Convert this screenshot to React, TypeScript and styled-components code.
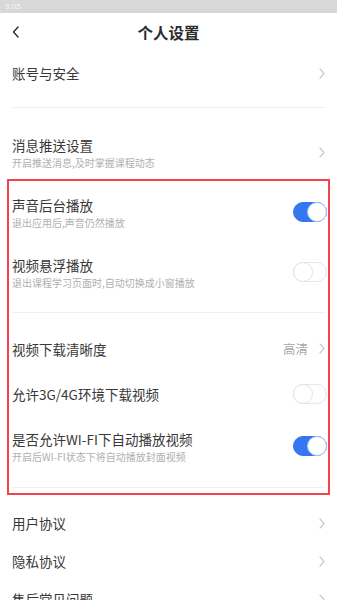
import React from "react";
import styled, { createGlobalStyle } from "styled-components";

const GlobalStyle = createGlobalStyle`
  html, body { margin: 0; padding: 0; background: #ffffff; }
  body { font-family: "Noto Sans CJK SC", "Noto Sans", sans-serif; -webkit-font-smoothing: antialiased; }
`;

const Page = styled.div`
  position: relative;
  width: 337px;
  height: 600px;
  overflow: hidden;
  background: #ffffff;
`;

const StatusBar = styled.div`
  height: 13px;
  background: #d8d8d8;
  display: flex;
  align-items: center;
  padding-left: 5px;
  font-family: "Roboto", "Noto Sans", sans-serif;
  font-size: 8px;
  color: #f4f4f4;
`;

const Header = styled.div`
  position: relative;
  height: 37px;
  display: flex;
  align-items: center;
  justify-content: center;
`;

const BackButton = styled.div`
  position: absolute;
  left: 11px;
  top: 12px;
  width: 10px;
  height: 14px;
  display: flex;
`;

const Title = styled.div`
  font-size: 15.5px;
  font-weight: 700;
  color: #2b2b2b;
  line-height: 20px;
`;

const Group = styled.div<{ $top: number; $bottom: number }>`
  padding: ${(p) => p.$top}px 0 ${(p) => p.$bottom}px;
`;

const Divider = styled.div`
  height: 1px;
  margin: 0 11px 0 12px;
  background: #f0f0f0;
`;

const Row = styled.div<{ $h: number }>`
  height: ${(p) => p.$h}px;
  padding: 0 10px 0 12px;
  display: flex;
  align-items: center;
  justify-content: space-between;
`;

const TextCol = styled.div`
  display: flex;
  flex-direction: column;
`;

const RowTitle = styled.div`
  font-size: 13.5px;
  line-height: 20px;
  color: #383838;
`;

const RowSub = styled.div`
  font-size: 10px;
  line-height: 14px;
  margin-top: 1px;
  color: #b0b0b0;
`;

const Right = styled.div`
  display: flex;
  align-items: center;
  gap: 10px;
`;

const Value = styled.span`
  font-size: 12.5px;
  color: #a8a8a8;
`;

const ChevronWrap = styled.span`
  display: flex;
  width: 8px;
  justify-content: center;
  margin-right: 1px;
`;

const Toggle = styled.div<{ $on: boolean }>`
  position: relative;
  width: 34px;
  height: 20px;
  border-radius: 10px;
  box-sizing: border-box;
  background: ${(p) => (p.$on ? "#3577f0" : "#ffffff")};
  border: 1px solid ${(p) => (p.$on ? "#3577f0" : "#e6e6e6")};
`;

const Knob = styled.div<{ $on: boolean }>`
  position: absolute;
  top: -1px;
  ${(p) => (p.$on ? "right: -1px;" : "left: -1px;")}
  width: 20px;
  height: 20px;
  border-radius: 50%;
  box-sizing: border-box;
  background: #ffffff;
  border: 1px solid ${(p) => (p.$on ? "#a9c4f5" : "#e2e2e2")};
`;

const Highlight = styled.div`
  position: absolute;
  left: 7px;
  top: 179px;
  width: 323px;
  height: 316px;
  box-sizing: border-box;
  border: 2px solid #f0434c;
  pointer-events: none;
`;

const Chevron = () => (
  <ChevronWrap>
    <svg width="6" height="11" viewBox="0 0 6 11" fill="none">
      <path d="M1 1 L5 5.5 L1 10" stroke="#c9c9c9" strokeWidth="1.2" strokeLinecap="round" strokeLinejoin="round" />
    </svg>
  </ChevronWrap>
);

const Switch = ({ on }: { on: boolean }) => (
  <Toggle $on={on}>
    <Knob $on={on} />
  </Toggle>
);

type Item = {
  title: string;
  sub?: string;
  h: number;
  kind: "link" | "toggle" | "value";
  on?: boolean;
  value?: string;
};

const SettingRow = ({ item }: { item: Item }) => (
  <Row $h={item.h}>
    <TextCol>
      <RowTitle>{item.title}</RowTitle>
      {item.sub && <RowSub>{item.sub}</RowSub>}
    </TextCol>
    <Right>
      {item.kind === "value" && <Value>{item.value}</Value>}
      {item.kind === "toggle" ? <Switch on={!!item.on} /> : <Chevron />}
    </Right>
  </Row>
);

const groups: { top: number; bottom: number; items: Item[]; divider: boolean }[] = [
  { top: 4, bottom: 15, divider: true, items: [{ title: "账号与安全", h: 38, kind: "link" }] },
  {
    top: 14,
    bottom: 10,
    divider: true,
    items: [
      { title: "消息推送设置", sub: "开启推送消息,及时掌握课程动态", h: 60, kind: "link" },
      { title: "声音后台播放", sub: "退出应用后,声音仍然播放", h: 60, kind: "toggle", on: true },
      { title: "视频悬浮播放", sub: "退出课程学习页面时,自动切换成小窗播放", h: 60, kind: "toggle", on: false },
    ],
  },
  {
    top: 13,
    bottom: 11,
    divider: true,
    items: [
      { title: "视频下载清晰度", h: 45, kind: "value", value: "高清" },
      { title: "允许3G/4G环境下载视频", h: 45, kind: "toggle", on: false },
      { title: "是否允许WI-FI下自动播放视频", sub: "开启后WI-FI状态下将自动播放封面视频", h: 60, kind: "toggle", on: true },
    ],
  },
  {
    top: 16,
    bottom: 0,
    divider: false,
    items: [
      { title: "用户协议", h: 38, kind: "link" },
      { title: "隐私协议", h: 38, kind: "link" },
      { title: "售后常见问题", h: 38, kind: "link" },
    ],
  },
];

export default function App() {
  return (
    <>
      <GlobalStyle />
      <Page>
        <StatusBar>3:05</StatusBar>
        <Header>
          <BackButton>
            <svg width="10" height="14" viewBox="0 0 10 14" fill="none">
              <path d="M7 2 L2.5 7 L7 12" stroke="#333" strokeWidth="1.5" strokeLinecap="round" strokeLinejoin="round" />
            </svg>
          </BackButton>
          <Title>个人设置</Title>
        </Header>
        {groups.map((g, i) => (
          <React.Fragment key={i}>
            <Group $top={g.top} $bottom={g.bottom}>
              {g.items.map((it) => (
                <SettingRow key={it.title} item={it} />
              ))}
            </Group>
            {g.divider && <Divider />}
          </React.Fragment>
        ))}
        <Highlight />
      </Page>
    </>
  );
}
